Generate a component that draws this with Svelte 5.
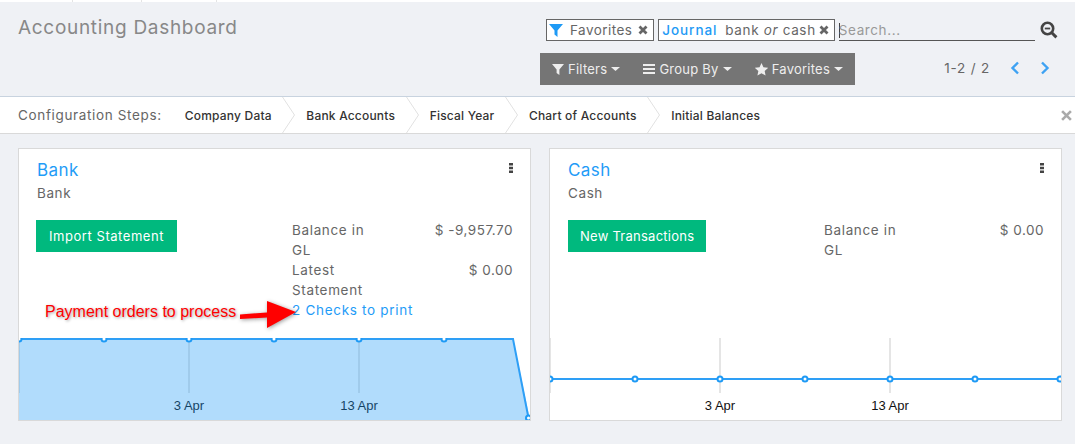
<script>
	const tabs = [73, 69, 75];
	const steps = ['Company Data', 'Bank Accounts', 'Fiscal Year', 'Chart of Accounts', 'Initial Balances'];
	const dots = [0, 85, 170, 255, 340, 425, 510];

	const journals = [
		{
			name: 'Bank',
			action: 'Import Statement',
			stats: [
				{ label: 'Balance in GL', value: '$ -9,957.70' },
				{ label: 'Latest Statement', value: '$ 0.00' }
			],
			link: '2 Checks to print',
			area: true
		},
		{
			name: 'Cash',
			action: 'New Transactions',
			stats: [{ label: 'Balance in GL', value: '$ 0.00' }],
			link: '',
			area: false
		}
	];
</script>

{#snippet caret()}
	<svg class="caret" viewBox="0 0 9 4" width="9" height="4"><path d="M0 0h9L4.500 4z" /></svg>
{/snippet}

{#snippet remove()}
	<svg class="remove" viewBox="0 0 10 10" width="10" height="10">
		<path d="M1.500 1.500l7 7M8.500 1.500l-7 7" />
	</svg>
{/snippet}

<div class="topstrip">
	{#each tabs as width}
		<span style={`width: ${width - 1}px`}></span>
	{/each}
</div>

<header class="panel">
	<h1>Accounting Dashboard</h1>
	<div class="panel-right">
		<div class="search-row">
			<div class="facet">
				<svg class="funnel" viewBox="0 0 14 14" width="14" height="14"><path d="M0 1h14L8.500 7.500V14l-3-2.500V7.500z" /></svg>
				<span>Favorites</span>
				{@render remove()}
			</div>
			<div class="facet">
				<span class="facet-name">Journal</span>
				<span class="facet-value">bank <em>or</em> cash</span>
				{@render remove()}
			</div>
			<div class="search-input">Search...</div>
			<svg class="search-icon" viewBox="0 0 18 18" width="18" height="18">
				<circle cx="7.500" cy="7.500" r="5.700" />
				<path d="M4.800 7.500h5.400" class="thin" />
				<path d="M11.800 11.800l4.600 4.600" class="handle" />
			</svg>
		</div>
		<div class="tools-row">
			<div class="toolbar">
				<span class="tool">
					<svg viewBox="0 0 12 12" width="12" height="12"><path d="M0 1h12L7.400 6.500V12L4.600 10V6.500z" /></svg>
					<span>Filters</span>
					{@render caret()}
				</span>
				<span class="tool">
					<svg viewBox="0 0 12 12" width="12" height="12"><path d="M0 1h12v2H0zM0 5h12v2H0zM0 9h12v2H0z" /></svg>
					<span>Group By</span>
					{@render caret()}
				</span>
				<span class="tool">
					<svg viewBox="0 0 14 14" width="13" height="13"><path d="M7 0l2.100 4.600 5 .6-3.700 3.400 1 4.900L7 11l-4.400 2.500 1-4.900L-.1 5.200l5-.6z" /></svg>
					<span>Favorites</span>
					{@render caret()}
				</span>
			</div>
			<div class="pager">
				<span>1-2 / 2</span>
				<svg viewBox="0 0 10 14" width="10" height="14"><path d="M8 1.500L2.500 7 8 12.500" /></svg>
				<svg viewBox="0 0 10 14" width="10" height="14"><path d="M2 1.500L7.500 7 2 12.500" /></svg>
			</div>
		</div>
	</div>
</header>

<nav class="config">
	<span class="config-title">Configuration Steps:</span>
	{#each steps as step, i}
		<span class="step">{step}</span>
		{#if i < steps.length - 1}
			<svg class="chevron" viewBox="0 0 13 36" width="13" height="36"><path d="M.5 0l12 18L.5 36" /></svg>
		{/if}
	{/each}
	<svg class="config-close" viewBox="0 0 10 10" width="11" height="11"><path d="M1 1l8 8M9 1l-8 8" /></svg>
</nav>

<main class="cards">
	{#each journals as journal}
		<article class="card">
			<div class="card-head">
				<div>
					<a class="card-title" href="#top">{journal.name}</a>
					<div class="card-sub">{journal.name}</div>
				</div>
				<svg class="dots" viewBox="0 0 4 10" width="4" height="10"><path d="M0 0h4v2.600H0zM0 3.700h4v2.600H0zM0 7.400h4V10H0z" /></svg>
			</div>
			<div class="card-body">
				<div class="card-action"><button>{journal.action}</button></div>
				<div class="card-stats">
					{#each journal.stats as stat}
						<div class="stat">
							<span class="stat-label">{stat.label}</span>
							<span class="stat-value">{stat.value}</span>
						</div>
					{/each}
					{#if journal.link}
						<a class="stat-link" href="#top">{journal.link}</a>
					{/if}
				</div>
			</div>
			<svg class="chart" viewBox="0 0 511 82" width="511" height="82">
				<path class="grid" d="M0 0V55M170 0V55M340 0V55" />
				<text x="170" y="72">3 Apr</text>
				<text x="340" y="72">13 Apr</text>
				{#if journal.area}
					<path class="area-fill" d="M0 0H494L511 82H0z" />
					<path class="line" d="M0 1H494L509.500 80" />
					{#each dots.slice(0, 6) as x}
						<circle class="dot" cx={x} cy="1" r="2.500" />
					{/each}
					<circle class="dot" cx="509.500" cy="80" r="2.500" />
				{:else}
					<path class="line" d="M0 41H511" />
					{#each dots as x}
						<circle class="dot" cx={x} cy="41" r="2.500" />
					{/each}
				{/if}
			</svg>
		</article>
	{/each}
	<div class="note">
		<span>Payment orders to process</span>
		<svg viewBox="0 0 56 27" width="56" height="27"><path d="M0 13.500L27 11.500V0L56 11 27 27V16.500L0 18z" /></svg>
	</div>
</main>

<style>
	:global(body) {
		margin: 0;
		background: #eff1f5;
		font-family: Inter, 'Open Sans', sans-serif;
		overflow: hidden;
	}

	.topstrip {
		display: flex;
		height: 2px;
		background: #fff;
	}

	.topstrip span {
		border-right: 1px solid #e4e4e4;
	}

	.panel {
		display: flex;
		justify-content: space-between;
		height: 95px;
		box-sizing: border-box;
		padding: 17px 18px 0;
		border-bottom: 1px solid #c8d3df;
	}

	h1 {
		margin: -1px 0 0;
		font-size: 19px;
		font-weight: 400;
		line-height: 20px;
		letter-spacing: 0.7px;
		color: #888;
	}

	.panel-right {
		width: 535px;
		margin-right: -18px;
	}

	.search-row {
		display: flex;
		align-items: stretch;
		height: 22px;
		margin-left: 6px;
		gap: 4px;
	}

	.facet {
		display: flex;
		align-items: center;
		gap: 8px;
		padding: 0 5px 0 3px;
		background: #fff;
		border: 1px solid #666;
		font-size: 13.5px;
		letter-spacing: 0.45px;
		color: #666;
	}

	.funnel {
		margin: 0 -1px;
		flex: none;
		fill: #1e9af5;
	}

	.facet-name {
		color: #1e9af5;
		font-weight: 500;
		letter-spacing: 0.9px;
	}

	.facet-value {
		margin-right: -3px;
		letter-spacing: 0.65px;
	}

	.remove {
		flex: none;
		margin-left: -2px;
		fill: none;
		stroke: #666;
		stroke-width: 2.800;
	}

	.search-input {
		width: 196px;
		box-sizing: border-box;
		line-height: 22px;
		border-bottom: 1px solid #555;
		font-size: 13.5px;
		letter-spacing: 0.6px;
		color: #999;
	}

	.search-input::before {
		content: '';
		display: inline-block;
		width: 1px;
		height: 15px;
		margin-right: -1px;
		vertical-align: -3px;
		background: #444;
	}

	.search-icon {
		align-self: center;
		margin-left: 1px;
		fill: none;
		stroke: #444;
		stroke-width: 2.600;
	}

	.search-icon .thin {
		stroke-width: 1.800;
	}

	.search-icon .handle {
		stroke-width: 3;
	}

	.tools-row {
		display: flex;
		align-items: center;
		justify-content: space-between;
		margin-top: 12px;
		padding-right: 25px;
	}

	.toolbar {
		display: flex;
		align-items: center;
		gap: 23px;
		height: 32px;
		padding: 0 12px;
		background: #757575;
		color: #eee;
		font-size: 13px;
		letter-spacing: 0.25px;
	}

	.tool {
		display: flex;
		align-items: center;
		gap: 4px;
	}

	.tool svg {
		fill: #eee;
	}

	.caret {
		flex: none;
	}

	.pager {
		display: flex;
		align-items: center;
		gap: 20px;
		margin-top: -2px;
		font-size: 13.5px;
		letter-spacing: 0.8px;
		color: #666;
	}

	.pager svg {
		fill: none;
		stroke: #3ea2f3;
		stroke-width: 2.400;
	}

	.config {
		display: flex;
		align-items: center;
		height: 36px;
		padding-left: 18px;
		background: #fff;
		border-bottom: 1px solid #d9d9d9;
		font-size: 13.5px;
		color: #333;
	}

	.config-title {
		margin-right: 23px;
		letter-spacing: 0.65px;
		color: #666;
	}

	.step {
		font-size: 12px;
		font-weight: 500;
		letter-spacing: 0.2px;
	}

	.chevron {
		margin: 0 11px 0 10.500px;
		fill: none;
		stroke: #e2e2e2;
	}

	.config-close {
		margin-left: auto;
		margin-right: 3px;
		fill: none;
		stroke: #aaa;
		stroke-width: 2.400;
	}

	.cards {
		position: relative;
		display: flex;
		gap: 18px;
		padding: 14px 13px 0 18px;
	}

	.card {
		display: flex;
		flex-direction: column;
		width: 513px;
		height: 273px;
		box-sizing: border-box;
		background: #fff;
		border: 1px solid #d9d9d9;
	}

	.card-head {
		display: flex;
		justify-content: space-between;
		height: 71px;
		box-sizing: border-box;
		padding: 10px 17px 0 18px;
	}

	.card-title {
		display: block;
		font-size: 17px;
		line-height: 22px;
		text-decoration: none;
		letter-spacing: 0.4px;
		color: #1f9cf7;
	}

	.card-sub {
		margin-top: 3px;
		font-size: 13.5px;
		line-height: 18px;
		letter-spacing: 0.6px;
		color: #666;
	}

	.dots {
		margin-top: 4px;
		fill: #444;
	}

	.card-body {
		display: flex;
		flex: 1;
		padding: 0 17px;
		font-size: 13.5px;
		line-height: 20px;
		letter-spacing: 0.65px;
		color: #666;
	}

	.card:last-of-type .card-body {
		padding-left: 18px;
	}

	.card-action {
		width: 256px;
	}

	button {
		height: 32px;
		padding: 0 13px;
		background: #00b97e;
		border: 0;
		color: #fff;
		font-family: inherit;
		font-size: 13px;
		letter-spacing: 0.55px;
	}

	.card:last-of-type button {
		padding: 0 12px;
		letter-spacing: 0.25px;
	}

	.card-stats {
		flex: 1;
	}

	.stat {
		display: flex;
		justify-content: space-between;
	}

	.stat-label {
		width: 85px;
	}

	.stat-value {
		letter-spacing: 0.5px;
	}

	.stat-link {
		color: #1f9cf7;
		letter-spacing: 0.7px;
		text-decoration: none;
	}

	.chart {
		display: block;
		flex: none;
		overflow: hidden;
	}

	.chart text {
		font-family: 'Liberation Sans', sans-serif;
		font-size: 13px;
		text-anchor: middle;
		fill: #111;
	}

	.area-fill {
		fill: #1f9bf5;
		fill-opacity: 0.35;
	}

	.grid {
		fill: none;
		stroke: #ddd;
		stroke-width: 1.500;
	}

	.line {
		fill: none;
		stroke: #2e9ff6;
		stroke-width: 2;
	}

	.dot {
		fill: #fff;
		stroke: #1e9af5;
		stroke-width: 2;
	}

	.note {
		position: absolute;
		left: 45px;
		top: 167px;
		display: flex;
		align-items: flex-start;
		gap: 4px;
		font-family: 'Liberation Sans', sans-serif;
		font-size: 16px;
		line-height: 18px;
		color: #f00;
		text-shadow: 1px 1px 3px rgba(0, 0, 0, 0.4);
	}

	.note span {
		margin-top: 2px;
	}

	.note svg {
		fill: #f00;
		filter: drop-shadow(1px 1px 2px rgba(0, 0, 0, 0.4));
	}
</style>
